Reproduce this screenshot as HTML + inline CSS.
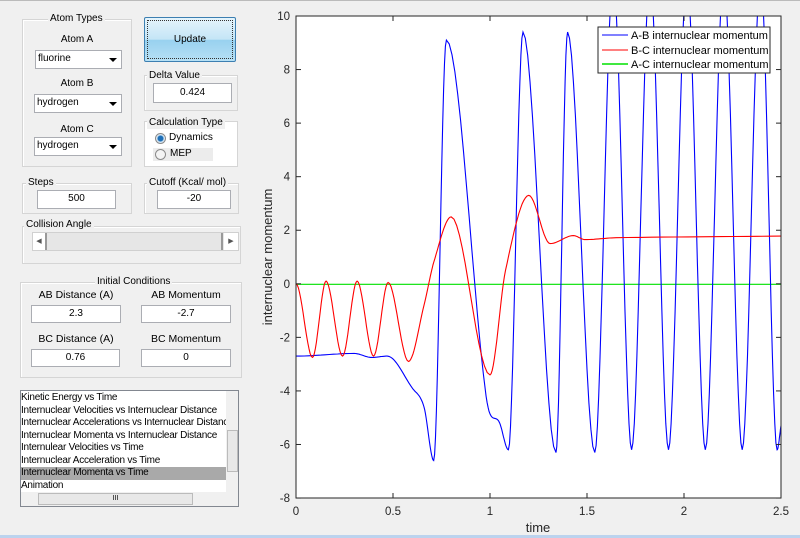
<!DOCTYPE html>
<html><head><meta charset="utf-8">
<style>
*{box-sizing:border-box}
body{margin:0;width:800px;height:538px;background:#f0f0f0;font-family:"Liberation Sans",Arial,sans-serif;font-size:10px;color:#000;position:relative;overflow:hidden}
.a{position:absolute}
.pn{position:absolute;border:1px solid #d5d5d5;box-shadow:inset 1px 1px 0 #fff}
.tt{position:absolute;background:#f0f0f0;padding:0 2px;white-space:nowrap;line-height:12px}
.in{position:absolute;background:#fff;border:1px solid #abadb3;text-align:center;line-height:16px}
.sel{position:absolute;background:#fff;border:1px solid #abadb3;line-height:16px;padding-left:2px}
.sel:after{content:"";position:absolute;right:4px;top:7px;border:4px solid transparent;border-top:4px solid #000;border-bottom:0}
.lb{position:absolute;text-align:center;white-space:nowrap}
.rad{position:absolute;width:11px;height:11px;border-radius:50%;border:1px solid #8a8a8a;background:#f4f4f4}
</style></head><body>
<div class="a" style="left:0;top:0;width:800px;height:1px;background:#bbb"></div>
<div class="a" style="left:0;top:535px;width:800px;height:3px;background:#bcd3ee"></div>

<div class="pn" style="left:22px;top:19px;width:110px;height:148px"></div>
<div class="tt" style="left:48px;top:13px">Atom Types</div>
<div class="lb" style="left:22px;top:34px;width:110px">Atom A</div>
<div class="sel" style="left:35px;top:50px;width:87px;height:19px">fluorine</div>
<div class="lb" style="left:22px;top:78px;width:110px">Atom B</div>
<div class="sel" style="left:34px;top:94px;width:88px;height:19px">hydrogen</div>
<div class="lb" style="left:22px;top:124px;width:110px">Atom C</div>
<div class="sel" style="left:34px;top:137px;width:88px;height:19px">hydrogen</div>

<div class="a" style="left:144px;top:17px;width:92px;height:45px;border:1px solid #3c7fb1;border-radius:2px;background:linear-gradient(#e5f4fc,#c4e5f6 50%,#98d1ef 51%,#b6e0f5);text-align:center;line-height:43px"><div style="position:absolute;inset:2px;border:1px dotted #333"></div>Update</div>

<div class="pn" style="left:144px;top:75px;width:94px;height:36px"></div>
<div class="tt" style="left:147px;top:70px">Delta Value</div>
<div class="in" style="left:153px;top:83px;width:79px;height:20px;line-height:18px">0.424</div>

<div class="pn" style="left:144px;top:121px;width:94px;height:46px;background:#fff"></div>
<div class="tt" style="left:147px;top:117px">Calculation Type</div>
<div class="rad" style="left:155px;top:133px;background:radial-gradient(circle,#1d6fb8 2.5px,#cfe4f5 3.5px,#f4f4f4 5px)"></div>
<div class="a" style="left:169px;top:132px">Dynamics</div>
<div class="a" style="left:153px;top:148px;width:60px;height:13px;background:#ececec"></div>
<div class="rad" style="left:155px;top:149px"></div>
<div class="a" style="left:170px;top:148px">MEP</div>

<div class="pn" style="left:22px;top:183px;width:110px;height:31px"></div>
<div class="tt" style="left:26px;top:177px">Steps</div>
<div class="in" style="left:37px;top:190px;width:79px;height:19px">500</div>
<div class="pn" style="left:144px;top:183px;width:95px;height:31px"></div>
<div class="tt" style="left:147px;top:177px">Cutoff (Kcal/ mol)</div>
<div class="in" style="left:157px;top:190px;width:74px;height:19px">-20</div>

<div class="pn" style="left:22px;top:226px;width:219px;height:38px"></div>
<div class="tt" style="left:24px;top:219px">Collision Angle</div>
<div class="a" style="left:32px;top:232px;width:207px;height:19px;background:#e6e6e6;border:1px solid #d0d0d0"></div>
<div class="a" style="left:33px;top:233px;width:12px;height:17px;background:#fff;text-align:center;font-size:7px;line-height:17px;color:#555">◀</div>
<div class="a" style="left:45px;top:233px;width:2px;height:17px;background:#999"></div>
<div class="a" style="left:221px;top:233px;width:2px;height:17px;background:#999"></div>
<div class="a" style="left:224px;top:233px;width:14px;height:17px;background:#fff;text-align:center;font-size:7px;line-height:17px;color:#555">▶</div>

<div class="pn" style="left:20px;top:282px;width:222px;height:96px"></div>
<div class="tt" style="left:95px;top:276px">Initial Conditions</div>
<div class="lb" style="left:30px;top:289px;width:92px;font-size:10.5px">AB Distance (A)</div>
<div class="lb" style="left:140px;top:289px;width:92px;font-size:10.5px">AB Momentum</div>
<div class="in" style="left:31px;top:305px;width:90px;height:18px">2.3</div>
<div class="in" style="left:141px;top:305px;width:90px;height:18px">-2.7</div>
<div class="lb" style="left:30px;top:333px;width:92px;font-size:10.5px">BC Distance (A)</div>
<div class="lb" style="left:140px;top:333px;width:92px;font-size:10.5px">BC Momentum</div>
<div class="in" style="left:31px;top:349px;width:89px;height:18px">0.76</div>
<div class="in" style="left:141px;top:349px;width:90px;height:18px">0</div>

<div class="a" style="left:20px;top:390px;width:219px;height:117px;background:#fff;border:1px solid #828790;overflow:hidden">
 <div style="position:absolute;left:0;top:1px;width:205px;line-height:12.5px;white-space:nowrap;overflow:hidden;font-size:10px;letter-spacing:-0.25px">
  <div>Kinetic Energy vs Time</div>
  <div>Internuclear Velocities vs Internuclear Distance</div>
  <div>Internuclear Accelerations vs Internuclear Distance</div>
  <div>Internuclear Momenta vs Internuclear Distance</div>
  <div>Internulear Velocities vs Time</div>
  <div>Internuclear Acceleration vs Time</div>
  <div style="background:#a9a9a9">Internuclear Momenta vs Time</div>
  <div>Animation</div>
 </div>
 <div style="position:absolute;left:205px;top:0;width:13px;height:101px;background:#f0f0f0"></div>
 <div style="position:absolute;left:206px;top:39px;width:11px;height:42px;background:#e8e8e8;border:1px solid #bbb"></div>
 <div style="position:absolute;left:0;top:101px;width:218px;height:15px;background:#f0f0f0"></div>
 <div style="position:absolute;left:17px;top:102px;width:155px;height:12px;background:#e8e8e8;border:1px solid #bbb;text-align:center;font-size:7px;line-height:10px">III</div>
</div>

<svg class="a" style="left:0;top:0" width="800" height="538" xmlns="http://www.w3.org/2000/svg">
<defs><clipPath id="c"><rect x="296" y="16" width="485" height="482"/></clipPath></defs>
<rect x="296" y="16" width="485" height="482" fill="#fff"/>
<g clip-path="url(#c)" fill="none" stroke-width="1.1">
<path id="g" stroke="#00e000" d="M296 284.3H781"/>
<path id="b" stroke="#0000ff"/>
<path id="r" stroke="#ff0000"/>
</g>
<rect x="296" y="16" width="485" height="482" fill="none" stroke="#262626" stroke-width="1"/>
<g id="ticks" stroke="#262626"></g>
<g font-family="Liberation Sans,Arial,sans-serif" font-size="11.5" fill="#262626" id="lab"></g>
<text x="538" y="532" font-family="Liberation Sans,Arial,sans-serif" font-size="13" fill="#262626" text-anchor="middle">time</text>
<text transform="translate(272,257) rotate(-90)" font-family="Liberation Sans,Arial,sans-serif" font-size="13" fill="#262626" text-anchor="middle">internuclear momentum</text>
<rect x="598" y="27" width="172" height="46" fill="#fff" stroke="#262626"/>
<g font-family="Liberation Sans,Arial,sans-serif" font-size="11" fill="#000">
<line x1="602" y1="35" x2="628" y2="35" stroke="#0000ff"/><text x="631" y="39">A-B internuclear momentum</text>
<line x1="602" y1="50" x2="628" y2="50" stroke="#ff0000"/><text x="631" y="54">B-C internuclear momentum</text>
<line x1="602" y1="64" x2="628" y2="64" stroke="#00e000" stroke-width="1.5"/><text x="631" y="68">A-C internuclear momentum</text>
</g>
</svg>
<script>
var X=function(t){return 296+194*t},Y=function(v){return 16+(10-v)*26.78};
function mk(p){var n=p.length,m=[];
for(var i=0;i<n;i++){if(i==0||i==n-1){m.push(i==0?0:(p[i][1]-p[i-1][1])/(p[i][0]-p[i-1][0]));continue;}
var a=p[i][1]-p[i-1][1],b=p[i+1][1]-p[i][1];
if(a*b<=0)m.push(0);else m.push((p[i+1][1]-p[i-1][1])/(p[i+1][0]-p[i-1][0]));}
var d="M"+X(p[0][0]).toFixed(1)+" "+Y(p[0][1]).toFixed(1);
for(var i=0;i<n-1;i++){var h=p[i+1][0]-p[i][0];for(var k=1;k<=14;k++){var s=k/14,s2=s*s,s3=s2*s;
var v=(2*s3-3*s2+1)*p[i][1]+(s3-2*s2+s)*h*m[i]+(-2*s3+3*s2)*p[i+1][1]+(s3-s2)*h*m[i+1];
d+="L"+X(p[i][0]+h*s).toFixed(1)+" "+Y(v).toFixed(1);}}return d;}
var B=[[0,-2.7],[0.3,-2.6],[0.39,-2.75],[0.47,-2.7],[0.6,-3.9],[0.66,-4.6],[0.71,-6.6],[0.775,9.1],[0.98,-4.2],[1.05,-5.2],[1.095,-6.2],[1.17,9.4],[1.34,-6.3],[1.40,9.4],[1.54,-6.3],[1.635,11.5],[1.73,-6.2],[1.825,11.5],[1.92,-6.2],[2.015,11.5],[2.11,-6.2],[2.205,11.5],[2.30,-6.2],[2.395,11.5],[2.48,-6.2],[2.5,-5.3]];
var R=[[0,0],[0.085,-2.75],[0.155,0.1],[0.24,-2.7],[0.315,0.1],[0.40,-2.7],[0.475,0.05],[0.58,-2.9],[0.66,-0.8],[0.71,0.8],[0.80,2.5],[1.0,-3.4],[1.08,0.5],[1.2,3.3],[1.31,1.5],[1.43,1.8],[1.49,1.65],[1.65,1.72],[2.5,1.78]];
document.getElementById("b").setAttribute("d",mk(B));
document.getElementById("r").setAttribute("d",mk(R));
var tk="",lb="";
for(var v=-8;v<=10;v+=2){var y=Y(v);tk+='<line x1="296" x2="301" y1="'+y+'" y2="'+y+'"/><line x1="776" x2="781" y1="'+y+'" y2="'+y+'"/>';lb+='<text x="290" y="'+(y+4)+'" text-anchor="end">'+v+'</text>';}
for(var t=0;t<=2.5;t+=0.5){var x=X(t);tk+='<line y1="498" y2="493" x1="'+x+'" x2="'+x+'"/><line y1="16" y2="21" x1="'+x+'" x2="'+x+'"/>';lb+='<text x="'+x+'" y="515" text-anchor="middle">'+t+'</text>';}
document.getElementById("ticks").innerHTML=tk;document.getElementById("lab").innerHTML=lb;
</script>
</body></html>
